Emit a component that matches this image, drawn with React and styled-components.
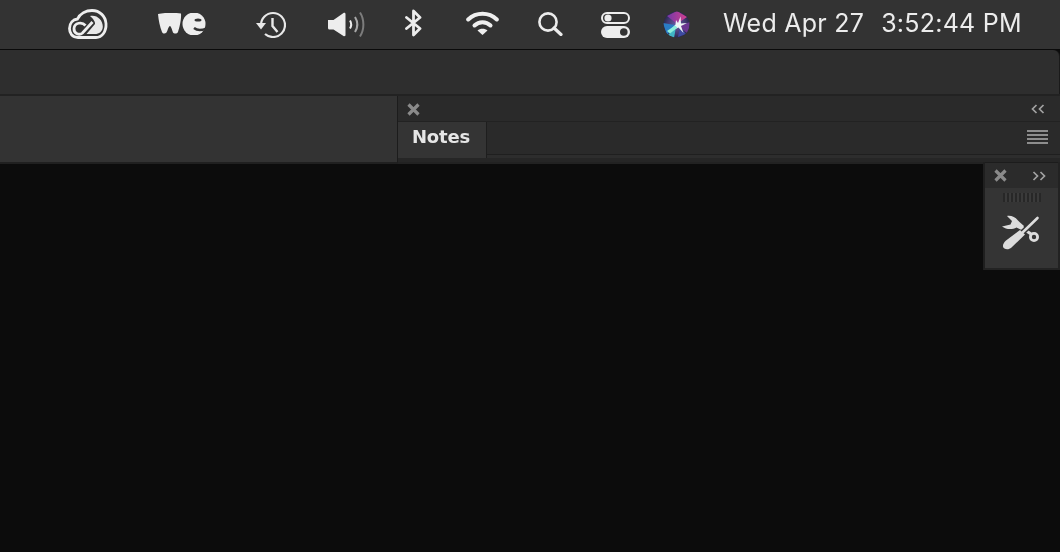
import React from "react";
import styled, { createGlobalStyle } from "styled-components";

const Global = createGlobalStyle`
  html, body { margin: 0; padding: 0; background: #0c0c0c; }
  body { width: 1060px; height: 552px; overflow: hidden; font-family: "Liberation Sans", Arial, sans-serif; }
  #root { height: 100%; }
`;

const Page = styled.div`
  position: relative;
  width: 1060px;
  height: 552px;
  display: flex;
  flex-direction: column;
  background: #0c0c0c;
  overflow: hidden;
`;

const MenuBar = styled.header`
  height: 49px;
  flex: none;
  background: #333333;
  border-bottom: 1px solid #0a0a0a;
  display: flex;
  align-items: center;
  padding-left: 68px;
  color: #ececec;
`;

const Slot = styled.span`
  width: ${(p) => p.$w}px;
  margin-right: ${(p) => p.$gap}px;
  padding-bottom: ${(p) => p.$lift}px;
  box-sizing: border-box;
  height: 49px;
  flex: none;
  display: flex;
  align-items: center;
  justify-content: center;
  filter: blur(0.35px);
`;

const Clock = styled.div`
  display: flex;
  gap: 17px;
  font-family: "Inter", "Liberation Sans", sans-serif;
  font-size: 25px;
  letter-spacing: 0.25px;
  color: #ececec;
  white-space: nowrap;
  line-height: 46px;
  height: 49px;
  filter: blur(0.3px);
`;

const Toolbar = styled.div`
  height: 44px;
  flex: none;
  background: #2e2e2e;
  border-top-right-radius: 6px;
  margin-right: 1px;
  box-shadow: 1px 0 0 #1a1a1a;
`;

const DockRow = styled.div`
  height: 70px;
  flex: none;
  display: flex;
  background: #1f1f1f;
  border-top: 2px solid #222222;
  box-sizing: border-box;
`;

const LeftDock = styled.div`
  width: 397px;
  flex: none;
  background: #333333;
  border-bottom: 2px solid #202020;
`;

const NotesPanel = styled.section`
  flex: 1;
  display: flex;
  flex-direction: column;
  background: #262626;
  border-left: 1px solid #1c1c1c;
  border-bottom: 2px solid #222;
  padding-bottom: 4px;
`;

const PanelHead = styled.div`
  height: 26px;
  flex: none;
  display: flex;
  align-items: center;
  justify-content: space-between;
  padding: 1px 15px 0 9px;
  box-sizing: border-box;
  background: #2a2a2a;
  border-bottom: 1px solid #222;
`;

const TabRow = styled.div`
  height: 36px;
  flex: none;
  display: flex;
  align-items: stretch;
  background: #2d2d2d;
`;

const Tab = styled.div`
  width: 89px;
  flex: none;
  background: #343434;
  border-right: 1px solid #1e1e1e;
  color: #e6e6e6;
  font-family: "DejaVu Sans", sans-serif;
  font-weight: 700;
  font-size: 18px;
  line-height: 29px;
  padding-left: 14px;
  box-sizing: border-box;
  letter-spacing: -0.2px;
  filter: blur(0.25px);
`;

const TabFill = styled.div`
  flex: 1;
  display: flex;
  align-items: center;
  justify-content: flex-end;
  padding: 0 12px 2px 0;
  margin-bottom: 3px;
  background: #2a2a2a;
  border-bottom: 1px solid #1f1f1f;
`;

const Burger = styled.div`
  width: 21px;
  height: 14px;
  background: repeating-linear-gradient(to bottom, #8d8d8d 0 2px, #2a2a2a 2px 4px);
`;

const ToolPanel = styled.aside`
  position: absolute;
  left: 983px;
  top: 162px;
  width: 77px;
  height: 108px;
  box-sizing: border-box;
  background: #343434;
  border-left: 2px solid #1f1f1f;
  border-right: 2px solid #222;
  border-bottom: 2px solid #232323;
  display: flex;
  flex-direction: column;
`;

const ToolHead = styled.div`
  height: 26px;
  flex: none;
  background: #2b2b2b;
  border-top: 1px solid #1c1c1c;
  box-sizing: border-box;
  display: flex;
  align-items: center;
  justify-content: space-between;
  padding: 0 12px 0 9px;
`;

const Grip = styled.div`
  width: 38px;
  height: 9px;
  flex: none;
  margin: 5px auto 0 auto;
  background: repeating-linear-gradient(to right, #272727 0 2px, #3a3a3a 2px 4px);
`;

const ToolIcon = styled.div`
  display: flex;
  justify-content: center;
  margin-top: 13px;
  margin-right: 1px;
  filter: blur(0.3px);
`;

const Close = () => (
  <svg width="13" height="13" viewBox="0 0 13 13">
    <path d="M1.5 1.5 11.5 11.5M11.5 1.5 1.5 11.5" stroke="#8a8a8a" strokeWidth="3.2" />
  </svg>
);

const Chev = ({ dir }) => (
  <svg width="14" height="10" viewBox="0 0 14 10" fill="none" stroke="#a2a2a2" strokeWidth="1.7">
    {dir === "left" ? (
      <path d="M5.5 1 1.5 5l4 4M12.5 1 8.5 5l4 4" />
    ) : (
      <path d="M1.5 1l4 4-4 4M8.5 1l4 4-4 4" />
    )}
  </svg>
);

const CC = () => (
  <svg width="40" height="30" viewBox="0 0 40 30" fill="none" stroke="#eee" strokeWidth="2.800">
    <path d="M10 28.500C4 28.500 1.500 24 1.500 19.500 1.500 14 5 10.500 9.500 10 12 4.500 18 1.500 24 1.500c8 0 13.500 6 14 13 .5 8-4 14-10 14z" />
    <path d="M17.500 16.500C14 12.500 6.500 13.500 6 19.500 5.800 25 11.500 26.500 14.500 24L24.500 13" />
    <path d="M22 7C29 5.500 34.800 11 34.800 17.500 34.800 22.500 31 25 27 25H18.500L27 15C27.500 13 25 9.500 22 7z" fill="#e8e8e8" stroke="none" />
  </svg>
);

const WeLogo = () => (
  <svg width="48" height="22" viewBox="0 0 48 22">
    <path d="M0 1C6-.5 17-.5 23 .5 23.500 6 21.500 15 20 19c-1 2-4 2-5 .5-1-2.500-2-6.500-3-6.500-1.500 0-2 4-3.500 6.500C7 21 5 21 4 19 2 14 .5 7 0 1z" fill="#ededed" />
    <circle cx="36" cy="11" r="11.500" fill="#ededed" />
    <ellipse cx="40" cy="7" rx="3.500" ry="1.600" fill="#333" />
    <path d="M36 15c3 2.500 8 2.500 13 .3" fill="none" stroke="#333" strokeWidth="2.400" />
  </svg>
);

const History = () => (
  <svg width="30" height="27" viewBox="0 0 30 27" fill="none" stroke="#e8e8e8" strokeWidth="2.200">
    <path d="M5 14A12 12 0 1 1 17 26a12 12 0 0 1-8-3" />
    <path d="M0 12h10L5 18.500z" fill="#e8e8e8" stroke="none" />
    <path d="M16.500 7v8l5 6" strokeWidth="2.400" />
  </svg>
);

const Volume = () => (
  <svg width="37" height="27" viewBox="0 0 37 27" fill="none">
    <path d="M0 9h5.500L15.500 2c.800-.400 2-.200 2 1v21c0 1.200-1.200 1.400-2 1L5.500 18.500H1.500C.500 18.500 0 17.800 0 17z" fill="#ededed" />
    <path d="M22 9.500c1.500 2.500 1.500 5.500 0 8" stroke="#ededed" strokeWidth="2" />
    <path d="M27 6c2.800 4.500 2.800 10.500 0 15" stroke="#a8a8a8" strokeWidth="2" />
    <path d="M32 1.500c4.500 7 4.500 17 0 24" stroke="#7c7c7c" strokeWidth="2" />
  </svg>
);

const Bluetooth = () => (
  <svg width="19" height="28" viewBox="0 0 19 28" fill="none" stroke="#ececec" strokeWidth="2.800" strokeLinejoin="round" strokeLinecap="round">
    <path d="M2.500 8.500 16 19.500 9.500 26V2L16 8.500 2.500 19.500" />
  </svg>
);

const Wifi = () => (
  <svg width="33" height="24" viewBox="0 0 33 24" fill="none" stroke="#efefef" strokeWidth="4" strokeLinecap="round">
    <path d="M2.200 8.500C10 .8 23 .8 30.800 8.500" />
    <path d="M8.500 14.500c4.500-4.500 11.500-4.500 16 0" />
    <path d="M11.500 19.500 16.500 24l5-4.500c-2.500-2.300-7.500-2.300-10 0z" fill="#efefef" stroke="none" />
  </svg>
);

const Search = () => (
  <svg width="25" height="24" viewBox="0 0 25 24" fill="none" stroke="#ececec">
    <circle cx="10" cy="10" r="8.600" strokeWidth="2.600" />
    <path d="M16 16 23 22.500" strokeWidth="3.200" strokeLinecap="round" />
  </svg>
);

const Switches = () => (
  <svg width="29" height="26" viewBox="0 0 29 26">
    <rect x="1" y="1" width="27" height="10" rx="5" fill="none" stroke="#ededed" strokeWidth="2" />
    <circle cx="7" cy="6" r="3.600" fill="#ededed" />
    <rect x="0" y="14" width="29" height="12" rx="6" fill="#ededed" />
    <circle cx="22.800" cy="20" r="3.800" fill="#333" />
  </svg>
);

const Siri = () => (
  <svg width="27" height="27" viewBox="0 0 27 27">
    <defs>
      <radialGradient id="siriBg" cx="50%" cy="50%" r="55%">
        <stop offset="0" stopColor="#6d5ea8" />
        <stop offset="0.65" stopColor="#40386f" />
        <stop offset="1" stopColor="#232440" />
      </radialGradient>
      <linearGradient id="siriTop" x1="0" y1="0" x2="1" y2="0">
        <stop offset="0" stopColor="#7338a8" />
        <stop offset="1" stopColor="#d23f8e" />
      </linearGradient>
      <filter id="siriSoft" x="-10%" y="-10%" width="120%" height="120%">
        <feGaussianBlur stdDeviation="0.7" />
      </filter>
      <clipPath id="siriClip">
        <circle cx="13.500" cy="13.500" r="13" />
      </clipPath>
    </defs>
    <circle cx="13.500" cy="13.500" r="13" fill="url(#siriBg)" />
    <g clipPath="url(#siriClip)">
      <g filter="url(#siriSoft)">
        <path d="M4 5 14 0 24 6 14 13z" fill="url(#siriTop)" />
        <path d="M0 12 12 14 4 24z" fill="#2c7cc4" />
        <path d="M16 15 27 11 25 23z" fill="#6b3490" />
        <path d="M5 24 13 16 11 27z" fill="#3fb5c4" />
        <path d="M17 16 23 23 15 26z" fill="#3c4aa0" />
      </g>
      <path d="M5.500 21 12.500 13.500 13 9l2 3 2.500-6.500.5 7L24 12l-6 3 2.500 7-5-5.500-5 2.500z" fill="#eef4f6" filter="url(#siriSoft)" />
      <path d="M4 20 12 14.500l2.500 2-7.500 6z" fill="#8cf0dc" filter="url(#siriSoft)" />
    </g>
  </svg>
);

const Tools = () => (
  <svg width="38" height="36" viewBox="0 0 38 36" fill="none">
    <path d="M5 1C9 .3 13.500 2 15.500 5L17.500 7 22 11 19.500 15 14.500 12.500C10 15 4 14.500 0 11.500L8.500 9.500 10 6z" fill="#dcdcdc" />
    <path d="M18 11.500 29 19" stroke="#dcdcdc" strokeWidth="3" />
    <path d="M35.500 3 21 17" stroke="#343434" strokeWidth="5.500" />
    <path d="M35.500 3 21 17" stroke="#dcdcdc" strokeWidth="2.600" strokeLinecap="round" />
    <path d="M18 15 23 19.500 9.500 32.500C6.500 35.500 1.500 34.500 1 31.500 .7 29.500 2 27.500 4 25.500z" fill="#dcdcdc" />
    <circle cx="32" cy="22" r="3.600" stroke="#dcdcdc" strokeWidth="2.800" />
  </svg>
);

const icons = [
  [CC, 40, 50, 2],
  [WeLogo, 48, 50, 1],
  [History, 30, 42, 0],
  [Volume, 37, 39, 1],
  [Bluetooth, 19, 43, 4],
  [Wifi, 33, 39, 3],
  [Search, 25, 37, 1],
  [Switches, 30, 33, 0],
  [Siri, 27, 33, 0],
];

export default function App() {
  return (
    <Page>
      <Global />
      <MenuBar>
        {icons.map(([Icon, w, gap, lift], i) => (
          <Slot key={i} $w={w} $gap={gap} $lift={lift}>
            <Icon />
          </Slot>
        ))}
        <Clock>
          <span>Wed Apr 27</span>
          <span>3:52:44 PM</span>
        </Clock>
      </MenuBar>
      <Toolbar />
      <DockRow>
        <LeftDock />
        <NotesPanel>
          <PanelHead>
            <Close />
            <Chev dir="left" />
          </PanelHead>
          <TabRow>
            <Tab>Notes</Tab>
            <TabFill>
              <Burger />
            </TabFill>
          </TabRow>
        </NotesPanel>
      </DockRow>
      <ToolPanel>
        <ToolHead>
          <Close />
          <Chev dir="right" />
        </ToolHead>
        <Grip />
        <ToolIcon>
          <Tools />
        </ToolIcon>
      </ToolPanel>
    </Page>
  );
}
